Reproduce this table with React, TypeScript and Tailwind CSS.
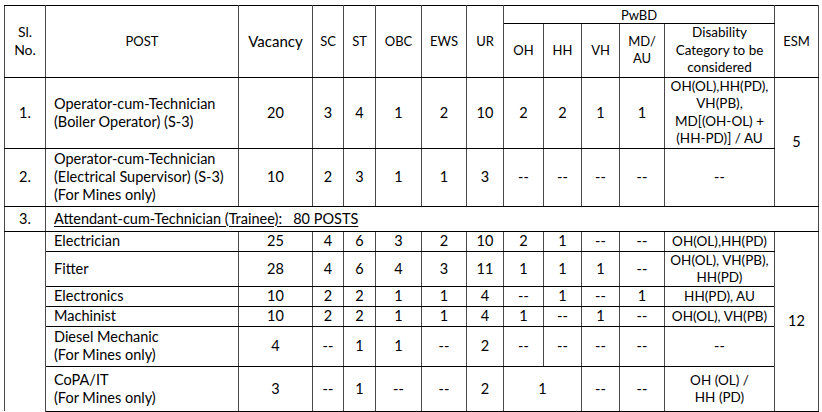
import React from "react";

type C = {
  children?: React.ReactNode;
  rs?: number;
  cs?: number;
  cls?: string;
};

const base = "border border-solid border-y-black border-x-[#4a4a4a] align-middle p-0";

function Td({ children, rs, cs, cls = "" }: C) {
  return (
    <td rowSpan={rs} colSpan={cs} className={`${base} text-center ${cls}`}>
      {children}
    </td>
  );
}

function Post({ children, rs }: C) {
  return (
    <td rowSpan={rs} className={`${base} text-left pl-[8px]`}>
      {children}
    </td>
  );
}

const D = "--";

export default function App() {
  const widths = [41, 193, 74, 31, 32, 46, 45, 37, 40, 38, 38, 45, 110, 44];
  return (
    <div className="w-[822px] h-[412px] bg-white pl-[4px] pt-[5px] font-['Lato',sans-serif] text-black text-[14.5px] leading-[18px]">
      <table className="table-fixed border-collapse w-[815px]">
        <colgroup>
          {widths.map((w, i) => (
            <col key={i} style={{ width: w }} />
          ))}
        </colgroup>
        <tbody>
          <tr className="h-[18px]">
            <Td rs={2} cls="text-[14px]">
              Sl.
              <br />
              No.
            </Td>
            <Td rs={2} cls="text-[13px]">POST</Td>
            <Td rs={2} cls="text-[15px]">Vacancy</Td>
            <Td rs={2} cls="text-[13px]">SC</Td>
            <Td rs={2} cls="text-[13px]">ST</Td>
            <Td rs={2} cls="text-[13px]">OBC</Td>
            <Td rs={2} cls="text-[13px]">EWS</Td>
            <Td rs={2} cls="text-[13px]">UR</Td>
            <Td cs={5} cls="text-[13px] leading-[16px]">PwBD</Td>
            <Td rs={2} cls="text-[13px]">ESM</Td>
          </tr>
          <tr className="h-[53px]">
            <Td cls="text-[13px]">OH</Td>
            <Td cls="text-[13px]">HH</Td>
            <Td cls="text-[13px]">VH</Td>
            <Td cls="text-[13px] leading-[17px]">
              MD/
              <br />
              AU
            </Td>
            <Td cls="text-[13.5px] leading-[17.5px]">
              Disability
              <br />
              Category to be
              <br />
              considered
            </Td>
          </tr>
          <tr className="h-[70px]">
            <Td>1.</Td>
            <Post>
              Operator-cum-Technician
              <br />
              (Boiler Operator) (S-3)
            </Post>
            <Td>20</Td>
            <Td>3</Td>
            <Td>4</Td>
            <Td>1</Td>
            <Td>2</Td>
            <Td>10</Td>
            <Td>2</Td>
            <Td>2</Td>
            <Td>1</Td>
            <Td>1</Td>
            <Td cls="text-[13.5px] leading-[17.5px]">
              OH(OL),HH(PD),
              <br />
              VH(PB),
              <br />
              MD[(OH-OL) +
              <br />
              (HH-PD)] / AU
            </Td>
            <Td rs={2}>5</Td>
          </tr>
          <tr className="h-[58px]">
            <Td>2.</Td>
            <Post>
              Operator-cum-Technician
              <br />
              (Electrical Supervisor) (S-3)
              <br />
              (For Mines only)
            </Post>
            <Td>10</Td>
            <Td>2</Td>
            <Td>3</Td>
            <Td>1</Td>
            <Td>1</Td>
            <Td>3</Td>
            <Td>{D}</Td>
            <Td>{D}</Td>
            <Td>{D}</Td>
            <Td>{D}</Td>
            <Td>{D}</Td>
          </tr>
          <tr className="h-[25px]">
            <Td>3.</Td>
            <td colSpan={13} className={`${base} text-left pl-[8px]`}>
              <span className="underline underline-offset-[2px]">
                Attendant-cum-Technician (Trainee):&nbsp;&nbsp; 80 POSTS
              </span>
            </td>
          </tr>
          <tr className="h-[20px]">
            <td rowSpan={6} className={`${base} border-b-0`}></td>
            <Post>Electrician</Post>
            <Td>25</Td>
            <Td>4</Td>
            <Td>6</Td>
            <Td>3</Td>
            <Td>2</Td>
            <Td>10</Td>
            <Td>2</Td>
            <Td>1</Td>
            <Td>{D}</Td>
            <Td>{D}</Td>
            <Td cls="text-[13.5px]">OH(OL),HH(PD)</Td>
            <Td rs={6}>12</Td>
          </tr>
          <tr className="h-[35px]">
            <Post>Fitter</Post>
            <Td>28</Td>
            <Td>4</Td>
            <Td>6</Td>
            <Td>4</Td>
            <Td>3</Td>
            <Td>11</Td>
            <Td>1</Td>
            <Td>1</Td>
            <Td>1</Td>
            <Td>{D}</Td>
            <Td cls="text-[13.5px] leading-[17px]">
              OH(OL), VH(PB),
              <br />
              HH(PD)
            </Td>
          </tr>
          <tr className="h-[20px]">
            <Post>Electronics</Post>
            <Td>10</Td>
            <Td>2</Td>
            <Td>2</Td>
            <Td>1</Td>
            <Td>1</Td>
            <Td>4</Td>
            <Td>{D}</Td>
            <Td>1</Td>
            <Td>{D}</Td>
            <Td>1</Td>
            <Td cls="text-[13.5px]">HH(PD), AU</Td>
          </tr>
          <tr className="h-[20px]">
            <Post>Machinist</Post>
            <Td>10</Td>
            <Td>2</Td>
            <Td>2</Td>
            <Td>1</Td>
            <Td>1</Td>
            <Td>4</Td>
            <Td>1</Td>
            <Td>{D}</Td>
            <Td>1</Td>
            <Td>{D}</Td>
            <Td cls="text-[13.5px]">OH(OL), VH(PB)</Td>
          </tr>
          <tr className="h-[40px]">
            <Post>
              Diesel Mechanic
              <br />
              (For Mines only)
            </Post>
            <Td>4</Td>
            <Td>{D}</Td>
            <Td>1</Td>
            <Td>1</Td>
            <Td>{D}</Td>
            <Td>2</Td>
            <Td>{D}</Td>
            <Td>{D}</Td>
            <Td>{D}</Td>
            <Td>{D}</Td>
            <Td>{D}</Td>
          </tr>
          <tr className="h-[45px]">
            <Post>
              CoPA/IT
              <br />
              (For Mines only)
            </Post>
            <Td>3</Td>
            <Td>{D}</Td>
            <Td>1</Td>
            <Td>{D}</Td>
            <Td>{D}</Td>
            <Td>2</Td>
            <Td cs={2}>1</Td>
            <Td>{D}</Td>
            <Td>{D}</Td>
            <Td cls="text-[13.5px] leading-[17px]">
              OH (OL) /
              <br />
              HH (PD)
            </Td>
          </tr>
        </tbody>
      </table>
    </div>
  );
}
